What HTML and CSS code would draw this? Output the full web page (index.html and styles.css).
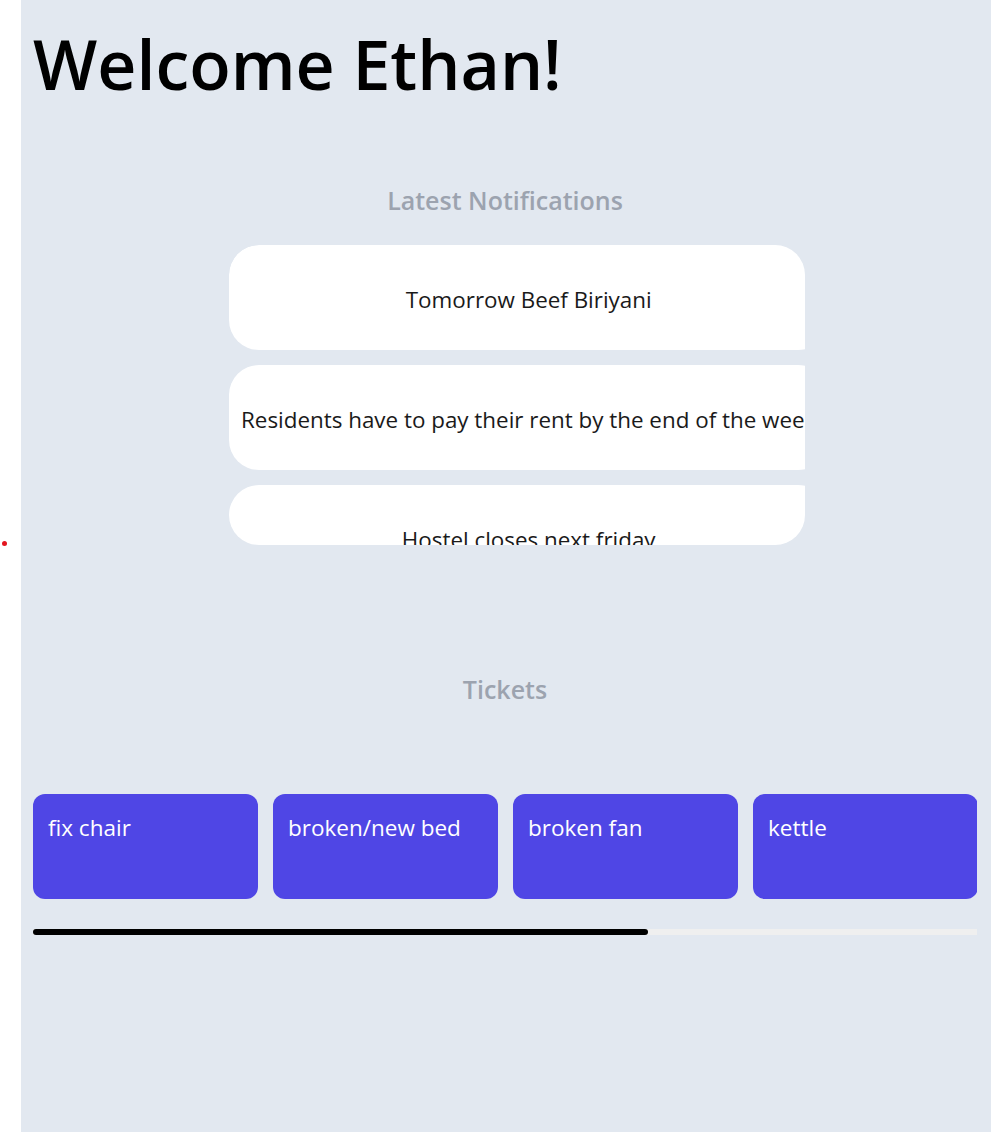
FILE: index.html
```html
<!DOCTYPE html>
<html lang="en">
<head>
<meta charset="utf-8">
<title>Dashboard</title>
<link rel="stylesheet" href="styles.css">
</head>
<body>
<div class="app">
  <aside class="rail"><span class="dot"></span></aside>
  <main class="main">
    <h1 class="welcome">Welcome Ethan!</h1>
    <section class="notices">
      <h2 class="section-title">Latest Notifications</h2>
      <div class="notice-scroll">
        <div class="notice-list">
          <div class="notice">Tomorrow Beef Biriyani</div>
          <div class="notice">Residents have to pay their rent by the end of the week</div>
          <div class="notice">Hostel closes next friday</div>
        </div>
      </div>
    </section>
    <section class="tickets">
      <h2 class="section-title">Tickets</h2>
      <div class="ticket-scroll">
        <div class="ticket">fix chair</div>
        <div class="ticket">broken/new bed</div>
        <div class="ticket">broken fan</div>
        <div class="ticket">kettle</div>
        <div class="ticket">leaking tap</div>
        <div class="ticket">wifi</div>
      </div>
      <div class="scroll-track"><div class="scroll-thumb" style="width: 65.1%"></div></div>
    </section>
  </main>
</div>
</body>
</html>
```
FILE: styles.css
```css
html, body { margin: 0; padding: 0; }
body { font-family: "Open Sans", "Noto Sans", sans-serif; background: #fff; }
.app { display: flex; min-height: 1132px; }
.rail { width: 21px; flex: none; background: #fff; position: relative; }
.dot { position: absolute; left: 2px; top: 541px; width: 5px; height: 5px; border-radius: 50%; background: #e3151f; }
.main { flex: 1; background: #e2e8f0; padding: 16px 14px 0 12px; min-width: 0; }
.welcome { margin: 0; font-size: 68px; font-weight: 600; line-height: 96px; color: #000; }
.section-title { margin: 0; text-align: center; font-size: 25px; font-weight: 600; color: #9ca3af; line-height: 32px; }
.notices { margin-top: 72px; }
.notice-scroll { width: 576px; height: 300px; margin: 29px 0 0 196px; border-radius: 30px; overflow: auto; scrollbar-width: none; }
.notice-scroll::-webkit-scrollbar { display: none; }
.notice-list { display: grid; gap: 15px; width: max-content; min-width: 100%; }
.notice { height: 105px; box-sizing: border-box; background: #fff; border-radius: 30px; display: flex; align-items: center; justify-content: center; padding: 4px 12px 0; font-size: 22.4px; color: #1a1a1a; white-space: nowrap; }
.tickets { margin-top: 128px; }
.ticket-scroll { display: flex; gap: 15px; margin-top: 89px; overflow: hidden; }
.ticket { flex: none; width: 225px; height: 105px; box-sizing: border-box; padding: 19px 15px 15px; border-radius: 12px; background: #4f46e5; color: #fff; font-size: 22.5px; line-height: 30px; }
.scroll-track { margin-top: 30px; height: 6px; background: #efefef; }
.scroll-thumb { height: 100%; background: #000; border-radius: 3px; }
```
